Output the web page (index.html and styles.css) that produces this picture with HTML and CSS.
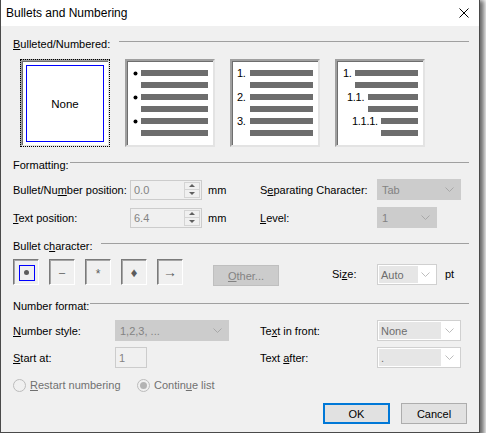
FILE: index.html
```html
<!DOCTYPE html>
<html>
<head>
<meta charset="utf-8">
<link rel="stylesheet" href="styles.css">
</head>
<body>
<div class="window">
  <div class="titlebar">
    <span class="title">Bullets and Numbering</span>
    <svg class="close" viewBox="0 0 10 10"><path d="M0.5 0.5L9.5 9.5M9.5 0.5L0.5 9.5" stroke="#000" stroke-width="1" fill="none"/></svg>
  </div>
  <div class="client">
    <div class="ghead gh-bul"><span class="glabel"><u>B</u>ulleted/Numbered:</span><div class="rule"></div></div>
    <div class="previews">
      <div class="preview none focus"><div class="none-inner">None</div></div>
      <div class="preview list bullets">
        <div class="prow"><span class="pnum"><i class="dot"></i></span><span class="pline"></span></div>
        <div class="prow"><span class="pnum"></span><span class="pline"></span></div>
        <div class="prow"><span class="pnum"><i class="dot"></i></span><span class="pline"></span></div>
        <div class="prow"><span class="pnum"></span><span class="pline"></span></div>
        <div class="prow"><span class="pnum"><i class="dot"></i></span><span class="pline"></span></div>
        <div class="prow"><span class="pnum"></span><span class="pline"></span></div>
      </div>
      <div class="preview list numbers">
        <div class="prow"><span class="pnum">1.</span><span class="pline"></span></div>
        <div class="prow"><span class="pnum"></span><span class="pline"></span></div>
        <div class="prow"><span class="pnum">2.</span><span class="pline"></span></div>
        <div class="prow"><span class="pnum"></span><span class="pline"></span></div>
        <div class="prow"><span class="pnum">3.</span><span class="pline"></span></div>
        <div class="prow"><span class="pnum"></span><span class="pline"></span></div>
      </div>
      <div class="preview list outline">
        <div class="prow"><span class="pnum l1">1.</span><span class="pline"></span></div>
        <div class="prow"><span class="pnum l1"></span><span class="pline"></span></div>
        <div class="prow"><span class="pnum l2">1.1.</span><span class="pline"></span></div>
        <div class="prow"><span class="pnum l2"></span><span class="pline"></span></div>
        <div class="prow"><span class="pnum l3">1.1.1.</span><span class="pline"></span></div>
        <div class="prow"><span class="pnum l3"></span><span class="pline"></span></div>
      </div>
    </div>

    <div class="ghead gh-fmt"><span class="glabel">Formatting:</span><div class="rule"></div></div>
    <div class="frow fr1">
      <div class="left">
        <span class="lbl w117">Bullet/Nu<u>m</u>ber position:</span>
        <div class="spin"><span class="val">0.0</span><div class="spinbtns"><span class="sb"><i class="up"></i></span><span class="sb"><i class="down"></i></span></div></div>
        <span class="unit">mm</span>
      </div>
      <span class="lbl w117">S<u>e</u>parating Character:</span>
      <div class="combo disabled w84"><span class="ctext">Tab</span><svg class="chev" viewBox="0 0 9 5"><polyline points="0.5,0.5 4.5,4.5 8.5,0.5" fill="none" stroke="#a8a8a8" stroke-width="1"/></svg></div>
    </div>
    <div class="frow fr2">
      <div class="left">
        <span class="lbl w117"><u>T</u>ext position:</span>
        <div class="spin"><span class="val">6.4</span><div class="spinbtns"><span class="sb"><i class="up"></i></span><span class="sb"><i class="down"></i></span></div></div>
        <span class="unit">mm</span>
      </div>
      <span class="lbl w117"><u>L</u>evel:</span>
      <div class="combo disabled w60"><span class="ctext">1</span><svg class="chev" viewBox="0 0 9 5"><polyline points="0.5,0.5 4.5,4.5 8.5,0.5" fill="none" stroke="#a8a8a8" stroke-width="1"/></svg></div>
    </div>

    <div class="ghead gh-bch"><span class="glabel">Bullet c<u>h</u>aracter:</span><div class="rule"></div></div>
    <div class="brow">
      <div class="bchars">
        <div class="bchar"><div class="bfocus"><i class="bdot"></i></div></div>
        <div class="bchar"><span class="glyph dash">–</span></div>
        <div class="bchar"><span class="glyph star">*</span></div>
        <div class="bchar"><span class="glyph diamond">♦</span></div>
        <div class="bchar"><span class="glyph arrow">→</span></div>
      </div>
      <div class="btn other"><span><u>O</u>ther...</span></div>
      <span class="lbl size-lbl">Si<u>z</u>e:</span>
      <div class="combo enabled w60 size"><span class="csel">Auto</span><svg class="chev" viewBox="0 0 9 5"><polyline points="0.5,0.5 4.5,4.5 8.5,0.5" fill="none" stroke="#bdbdbd" stroke-width="1"/></svg></div>
      <span class="unit pt">pt</span>
    </div>

    <div class="ghead gh-num"><span class="glabel">Number format:</span><div class="rule"></div></div>
    <div class="frow nr1">
      <div class="left">
        <span class="lbl w102"><u>N</u>umber style:</span>
        <div class="combo disabled w114"><span class="ctext">1,2,3, ...</span><svg class="chev" viewBox="0 0 9 5"><polyline points="0.5,0.5 4.5,4.5 8.5,0.5" fill="none" stroke="#a8a8a8" stroke-width="1"/></svg></div>
      </div>
      <span class="lbl w117">Te<u>x</u>t in front:</span>
      <div class="combo enabled w84"><span class="csel wide">None</span><svg class="chev" viewBox="0 0 9 5"><polyline points="0.5,0.5 4.5,4.5 8.5,0.5" fill="none" stroke="#bdbdbd" stroke-width="1"/></svg></div>
    </div>
    <div class="frow nr2">
      <div class="left">
        <span class="lbl w102"><u>S</u>tart at:</span>
        <div class="edit"><span class="val">1</span></div>
      </div>
      <span class="lbl w117">Text <u>a</u>fter:</span>
      <div class="combo enabled w84"><span class="csel wide">.</span><svg class="chev" viewBox="0 0 9 5"><polyline points="0.5,0.5 4.5,4.5 8.5,0.5" fill="none" stroke="#bdbdbd" stroke-width="1"/></svg></div>
    </div>

    <div class="rrow">
      <div class="ropt r1"><span class="radio"></span><span class="rtext"><u>R</u>estart numbering</span></div>
      <div class="ropt"><span class="radio checked"><i></i></span><span class="rtext">Contin<u>u</u>e list</span></div>
    </div>

    <div class="actions">
      <div class="btn push default">OK</div>
      <div class="btn push">Cancel</div>
    </div>
  </div>
</div>
</body>
</html>
```

FILE: styles.css
```css
* { box-sizing: border-box; }
html, body { margin: 0; background: #fff; }
body { font-family: "Liberation Sans", Arial, sans-serif; font-size: 11px; color: #000; }
u { text-decoration: underline; text-underline-offset: 1px; }
i { font-style: normal; }

.window {
  width: 480px; height: 433px;
  border: 1px solid #4a4a4a; border-top: 0;
  background: #f0f0f0;
  box-shadow: 2px 2px 5px 2px rgba(0,0,0,.6);
  display: flex; flex-direction: column;
}
.titlebar {
  flex: none; height: 26px; background: #fff;
  display: flex; align-items: center; justify-content: space-between;
  padding: 0 10px 0 5px;
}
.title { font-size: 12px; }
.close { width: 10px; height: 10px; display: block; }

.client { padding: 10px 10px 0 12px; display: flex; flex-direction: column; }

/* group headers */
.ghead { display: flex; align-items: flex-start; height: 16px; line-height: 16px; flex: none; }
.glabel { flex: none; white-space: nowrap; }
.ghead .rule { flex: 1; height: 1px; background: #a0a0a0; margin-top: 5px; }
.gh-bul .glabel { width: 106px; }
.gh-fmt { margin-top: 10px; }
.gh-fmt .glabel { width: 57px; }
.gh-bch { margin-top: 10px; }
.gh-bch .glabel { width: 88px; }
.gh-num { margin-top: 13px; }
.gh-num .glabel { width: 77px; }

/* previews */
.previews { display: flex; gap: 15px; margin-top: 7px; padding-left: 7px; }
.preview {
  width: 90px; height: 88px; background: #fff;
  border: 2px solid; border-color: #a0a0a0 #e3e3e3 #e3e3e3 #a0a0a0;
  box-shadow: inset 1px 1px 0 #6e6e6e;
}
.preview.focus { outline: 1px dotted #000; outline-offset: -1px; }
.preview.none { display: flex; padding: 4px 4px 3px 4px; }
.none-inner {
  flex: 1; border: 1px solid #0000ff;
  display: flex; align-items: center; justify-content: center;
  font-size: 11.5px;
}
.preview.list { display: flex; flex-direction: column; gap: 6px; padding: 9px 5px 0 0; }
.prow { display: flex; align-items: center; height: 6px; }
.pnum { flex: none; line-height: 6px; font-size: 11px; white-space: nowrap; letter-spacing: -0.3px; }
.pline { flex: 1; height: 6px; background: #6d6d6d; }
.bullets .pnum { width: 14px; padding-left: 7px; display: flex; align-items: center; }
.dot { display: block; width: 3px; height: 3px; border-radius: 50%; background: #000; box-shadow: 0 0 0 0.5px #000; }
.numbers .pnum { width: 18px; padding-left: 5px; }
.outline .pnum.l1 { width: 18px; padding-left: 6px; }
.outline .pnum.l2 { width: 31px; padding-left: 10px; }
.outline .pnum.l3 { width: 44px; padding-left: 15px; }

/* form rows */
.frow { display: flex; align-items: center; height: 21px; flex: none; }
.fr1 { margin-top: 6px; }
.fr2 { margin-top: 7px; }
.left { width: 247px; flex: none; display: flex; align-items: center; }
.lbl { flex: none; white-space: nowrap; }
.w117 { width: 117px; }
.w102 { width: 102px; }

.spin {
  width: 72px; height: 20px; border: 1px solid #cccccc; background: #f0f0f0;
  display: flex; align-items: stretch;
}
.val { flex: 1; color: #838383; padding-left: 3px; display: flex; align-items: center; }
.spinbtns { width: 17px; display: flex; flex-direction: column; padding: 1px 1px 1px 0; }
.sb {
  flex: 1; display: flex; align-items: center; justify-content: center;
  border: 1px solid #d4d4d4; background: #f0f0f0;
}
.sb + .sb { border-top: 0; }
.up { width: 0; height: 0; border-left: 3px solid transparent; border-right: 3px solid transparent; border-bottom: 3px solid #606060; }
.down { width: 0; height: 0; border-left: 3px solid transparent; border-right: 3px solid transparent; border-top: 3px solid #606060; }
.unit { margin-left: 6px; }

.combo {
  height: 21px; display: flex; align-items: center; justify-content: space-between;
  padding: 0 6px 0 4px; flex: none;
}
.combo.disabled { background: #cccccc; border: 1px solid #cccccc; color: #838383; }
.combo.enabled { background: #fff; border: 1px solid #d0d0d0; color: #6d6d6d; padding: 1px 6px 1px 1px; align-items: stretch; }
.combo.enabled .chev { align-self: center; }
.csel { background: #e6e6e6; width: 39px; padding-left: 2px; display: flex; align-items: center; }
.csel.wide { width: 62px; }
.w84 { width: 84px; }
.w60 { width: 60px; }
.w114 { width: 114px; }
.chev { width: 9px; height: 5px; display: block; flex: none; }

/* bullet characters */
.brow { display: flex; align-items: flex-start; margin-top: 5px; height: 26px; flex: none; }
.bchars { display: flex; gap: 10px; }
.bchar {
  width: 26px; height: 26px; background: #f0f0f0;
  border: 1px solid; border-color: #7a7a7a #ffffff #ffffff #7a7a7a;
  box-shadow: inset 1px 1px 0 #a6a6a6;
  display: flex; align-items: center; justify-content: center;
  color: #5c5c5c;
}
.bfocus { width: 16px; height: 16px; border: 1px solid #0000ff; display: flex; align-items: center; justify-content: center; margin: 1px 0 0 1px; }
.bdot { display: block; width: 5px; height: 5px; border-radius: 50%; background: #5c5c5c; }
.glyph { line-height: 1; }
.dash { font-size: 11px; }
.star { font-size: 12px; margin-top: 3px; }
.diamond { font-size: 13px; }
.arrow { font-size: 14px; }

.btn { display: flex; align-items: center; justify-content: center; flex: none; }
.other {
  width: 66px; height: 21px; margin: 6px 0 0 30px;
  background: #cccccc; border: 1px solid #bfbfbf; color: #838383;
}
.size-lbl { margin: 0 0 0 53px; width: 45px; line-height: 16px; margin-top: 7px; }
.combo.size { margin-top: 5px; }
.pt { margin-top: 7px; margin-left: 8px; line-height: 16px; }

/* number format */
.nr1 { margin-top: 6px; }
.nr2 { margin-top: 6px; }
.edit { width: 32px; height: 21px; border: 1px solid #cccccc; background: #f0f0f0; display: flex; }

.rrow { display: flex; align-items: center; height: 16px; margin-top: 9px; color: #707070; flex: none; }
.ropt { display: flex; align-items: center; }
.r1 { width: 124px; }
.radio {
  width: 13px; height: 13px; border-radius: 50%; border: 1px solid #bcbcbc; background: #f0f0f0;
  display: flex; align-items: center; justify-content: center; flex: none;
}
.radio.checked i { display: block; width: 7px; height: 7px; border-radius: 50%; background: #b3b3b3; }
.rtext { margin-left: 4px; white-space: nowrap; }

.actions { display: flex; justify-content: flex-end; gap: 11px; margin-top: 10px; padding-right: 2px; flex: none; }
.push { height: 21px; background: #e1e1e1; border: 1px solid #adadad; width: 66px; }
.push.default { width: 67px; border: 2px solid #0078d7; }
```
